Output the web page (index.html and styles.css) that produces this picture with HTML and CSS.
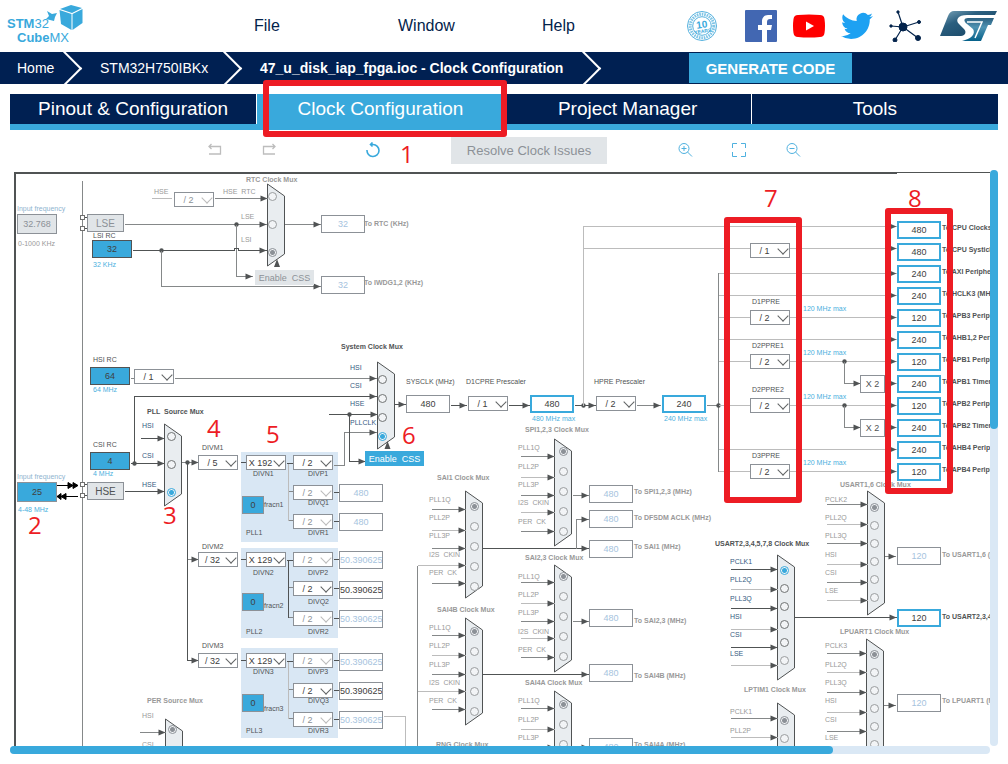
FILE: index.html
```html
<!DOCTYPE html>
<html lang="en">
<head>
<meta charset="utf-8">
<title>STM32CubeMX - Clock Configuration</title>
<link rel="stylesheet" href="styles.css">
</head>
<body>
<header class="topbar">
  <a class="logo" href="#" aria-label="STM32CubeMX">
    <svg class="logo-art" viewBox="0 0 80 48" aria-hidden="true">
      <path d="M53 7 64 3 75 6 65 11z" />
      <path d="M52.500 8 64.500 12V28L54 22z" />
      <path d="M65.500 12 75.500 7V21L65.500 28z" />
      <path d="M40 9l5 3 5-1-2 4-1 4-4-1-4-1 3-3z" />
    </svg>
    <span class="logo-top"><b>STM</b>32</span>
    <span class="logo-bottom"><b>Cube</b>MX</span>
  </a>
  <nav class="menu" aria-label="Main">
    <a href="#">File</a>
    <a href="#">Window</a>
    <a href="#">Help</a>
  </nav>
  <div class="links">
    <a href="#" aria-label="10 years longevity">
      <svg width="32" height="32" viewBox="0 0 32 32" fill="none" stroke="#55b1de">
        <circle cx="16" cy="16" r="14.500" /><circle cx="16" cy="16" r="11.800" stroke-width="3" stroke-dasharray="1.600 .900" opacity=".75" /><circle cx="16" cy="16" r="9.300" />
        <g transform="rotate(-8 16 16)"><text x="16" y="18" class="badge-num">10</text><text x="16" y="23" class="badge-cap">YEARS</text></g>
      </svg></a>
    <a href="#" aria-label="Facebook">
      <svg width="32" height="32" viewBox="0 0 32 32"><path fill="#4267b2" d="M1 0h30a1 1 0 0 1 1 1v30a1 1 0 0 1-1 1h-9V20h4l1-5h-5v-3c0-2 1-3 3-3h2V5h-4c-4 0-6 3-6 6v4h-4v5h4v12H1a1 1 0 0 1-1-1V1a1 1 0 0 1 1-1z" /></svg></a>
    <a href="#" aria-label="YouTube">
      <svg width="32" height="32" viewBox="0 0 32 32"><path fill="#f00" d="M5 5Q16 4 27 5q4 0 4.500 4 1 7 0 14-.5 4-4.500 4-11 1-22 0-4 0-4.500-4-1-7 0-14Q1 5 5 5z" /><path fill="#fff" d="M13 11.500v9l8-4.500z" /></svg></a>
    <a href="#" aria-label="Twitter">
      <svg width="32" height="32" viewBox="0 0 24 24"><path fill="#1da1f2" d="M23.950 4.570a10 10 0 0 1-2.820.770 4.960 4.960 0 0 0 2.160-2.720c-.950.550-2 .950-3.130 1.180a4.920 4.920 0 0 0-8.380 4.480C7.690 8.090 4.070 6.130 1.640 3.160a4.820 4.820 0 0 0-.670 2.480c0 1.710.870 3.210 2.190 4.090a4.900 4.900 0 0 1-2.230-.610v.060c0 2.390 1.700 4.380 3.950 4.830a5 5 0 0 1-2.210.080 4.940 4.940 0 0 0 4.600 3.420A9.870 9.870 0 0 1 0 19.540a14 14 0 0 0 7.550 2.210c9.050 0 14-7.500 14-13.980 0-.210 0-.420-.020-.630a9.940 9.940 0 0 0 2.460-2.550z" /></svg></a>
    <a href="#" aria-label="Community">
      <svg width="32" height="32" viewBox="0 0 32 32" fill="#03234b" stroke="#03234b"><path fill="none" stroke-width="1.200" d="M14 17 9 2M14 17 30 12M14 17 2 16M14 17 6 30M14 17 29 28" /><circle cx="14" cy="17" r="4" /><circle cx="9" cy="2" r="1.200" /><circle cx="30" cy="12" r="1.500" /><circle cx="2" cy="16" r="1.200" /><circle cx="6" cy="30" r="2" /><circle cx="29" cy="28" r="2.500" /></svg></a>
    <a href="#" aria-label="STMicroelectronics">
      <svg width="58" height="32" viewBox="0 0 58 32">
        <defs>
          <linearGradient id="st-back" x1="0" y1="0" x2="1" y2="1"><stop offset="0" stop-color="#7fa9bd" /><stop offset=".35" stop-color="#2b5f7f" /><stop offset="1" stop-color="#123f5e" /></linearGradient>
          <linearGradient id="st-front" x1="0" y1="0" x2="0" y2="1"><stop offset="0" stop-color="#2b5f7f" /><stop offset=".4" stop-color="#4f93b3" /><stop offset="1" stop-color="#05618a" /></linearGradient>
        </defs>
        <path fill="url(#st-back)" d="M14 1H57L55 5H27C18 5 15 10 19 14L24 19C27 22 25 26 21 26H0L8 6Q10 1 14 1z" />
        <path fill="url(#st-front)" d="M28 8H54L51 15H48L41 31H22C31 29 36 24 33 19L27 14C23 11 24 8 28 8z" />
        <path fill="none" stroke="#fff" stroke-width="1.500" d="M27 12H42L35 28" />
      </svg></a>
  </div>
</header>

<nav class="crumbs" aria-label="Breadcrumb">
  <a class="crumb crumb-home" href="#">Home</a>
  <a class="crumb crumb-chip" href="#">STM32H750IBKx</a>
  <a class="crumb crumb-file" href="#" aria-current="page">47_u_disk_iap_fpga.ioc - Clock Configuration</a>
  <button class="generate" type="button">GENERATE CODE</button>
</nav>

<nav class="tabs" aria-label="Project views">
  <a class="tab" href="#">Pinout &amp; Configuration</a>
  <a class="tab tab-active" href="#">Clock Configuration<span class="mark mark-tab"></span></a>
  <a class="tab" href="#">Project Manager</a>
  <a class="tab" href="#">Tools</a>
</nav>

<div class="toolbar">
  <div class="tools-history">
    <button class="tool" type="button" aria-label="Undo"><svg width="16" height="16" viewBox="0 0 16 16" fill="none" stroke="#bdbdbd" stroke-width="1.300"><path d="M4.500 2 2 4.500 4.500 7M2 4.500h11.500v7.500H2" /></svg></button>
    <button class="tool" type="button" aria-label="Redo"><svg width="16" height="16" viewBox="0 0 16 16" fill="none" stroke="#bdbdbd" stroke-width="1.300"><path d="M11.500 2 14 4.500 11.500 7M14 4.500H2.500v7.500H14" /></svg></button>
  </div>
  <button class="tool" type="button" aria-label="Reset"><svg width="16" height="16" viewBox="0 0 16 16" fill="none" stroke="#39a9dc" stroke-width="1.600"><path d="M6 2.500H8A6 6 0 1 1 2 8M7.500 .500 5.500 2.500l2 2" /></svg></button>
  <span class="step">1</span>
  <button class="resolve" type="button" disabled>Resolve Clock Issues</button>
  <div class="tools-zoom">
    <button class="tool" type="button" aria-label="Zoom in"><svg width="16" height="16" viewBox="0 0 16 16" fill="none" stroke="#4fb1df"><circle cx="7" cy="6.500" r="5" /><path d="M10.500 10 15 14.500M4.500 6.500h5M7 4v5" /></svg></button>
    <button class="tool" type="button" aria-label="Fit"><svg width="16" height="16" viewBox="0 0 16 16" fill="none" stroke="#4fb1df"><path d="M1.500 6V1.500H6M10 1.500h4.500V6M14.500 10v4.500H10M6 14.500H1.500V10" /></svg></button>
    <button class="tool" type="button" aria-label="Zoom out"><svg width="16" height="16" viewBox="0 0 16 16" fill="none" stroke="#4fb1df"><circle cx="7" cy="6.500" r="5" /><path d="M10.500 10 15 14.500M4.500 6.500h5" /></svg></button>
  </div>
</div>

<main class="workspace">
  <div class="viewport"><div class="board" id="board"></div></div>
  <div class="scroll scroll-v"><div class="thumb"></div></div>
  <div class="scroll scroll-h"><div class="thumb"></div></div>
</main>
<script src="board.js"></script>
</body>
</html>
```
FILE: styles.css
```css
* { box-sizing: border-box; }
body {
  margin: 0;
  height: 100vh;
  display: flex;
  flex-direction: column;
  overflow: hidden;
  background: #fff;
  font-family: "Liberation Sans", Arial, sans-serif;
  color: #03234b;
}
a { color: inherit; text-decoration: none; }
button, input, select { font-family: inherit; margin: 0; padding: 0; border-radius: 0; }

.topbar { display: flex; align-items: center; height: 52px; flex: none; padding: 0 10px 0 7px; }
.logo { position: relative; display: flex; flex-direction: column; width: 80px; height: 48px; padding-top: 15px; color: #39a9dc; font-size: 13px; line-height: 14px; white-space: nowrap; }
.logo-bottom { padding-left: 10px; }
.logo-art { position: absolute; inset: 0; width: 80px; height: 48px; fill: #39a9dc; }
.menu { display: grid; grid-template-columns: repeat(3, 144px); margin-left: 167px; font-size: 16px; }
.links { display: flex; align-items: center; gap: 16px; margin-left: auto; }
.links a { display: flex; }
.links a:first-child { margin-right: 11px; }
.links a:last-child { margin-left: 3px; }
.badge-num { font: bold 10px "Liberation Sans", sans-serif; fill: #39a9dc; stroke: none; text-anchor: middle; }
.badge-cap { font: bold 5px "Liberation Sans", sans-serif; fill: #39a9dc; stroke: none; text-anchor: middle; }

.crumbs { display: flex; align-items: stretch; height: 32px; flex: none; background: #002052; color: #fff; font-size: 14px; overflow: hidden; }
.crumb { position: relative; display: flex; align-items: center; }
.crumb::after { content: ""; position: absolute; right: 7px; top: 4px; width: 23px; height: 23px; border: solid #fff; border-width: 2px 2px 0 0; transform: rotate(45deg); }
.crumb-home { width: 84px; padding-left: 17px; }
.crumb-chip { width: 160px; padding-left: 16px; }
.crumb-file { width: 359px; padding-left: 16px; font-weight: bold; }
.generate { margin: 1px 0 1px 86px; width: 163px; border: 0; background: #39a9dc; color: #fff; font-size: 15px; font-weight: bold; }

.tabs { display: grid; grid-template-columns: repeat(4, 1fr); gap: 1px; flex: none; height: 36px; margin: 10px 10px 0; border-bottom: 6px solid #39a9dc; }
.tab { position: relative; display: flex; align-items: center; justify-content: center; background: #002052; color: #fff; font-size: 19px; }
.tab-active { background: #39a9dc; }
.mark { position: absolute; border: 6px solid #ed1c24; border-radius: 3px; z-index: 5; pointer-events: none; }
.mark-tab { inset: -14px -3px -13px 6px; }

.toolbar { display: flex; align-items: center; flex: none; height: 40px; padding-left: 207px; }
.tool { display: flex; border: 0; background: none; }
.tools-history { display: flex; gap: 38px; margin-right: 88px; }
.tools-zoom { display: flex; gap: 38px; margin-left: 70px; }
.step { color: #ed1c24; font: 24px/24px "Open Sans", "Noto Sans", sans-serif; }
.toolbar .step { width: 14px; margin: 8px 37px 0 19px; }
.resolve { width: 156px; height: 27px; border: 0; background: #e1e5e8; color: #8c9197; font-size: 13px; }

.workspace { display: grid; grid-template: 1fr 8px / 1fr 8px; flex: 1; min-height: 0; margin: 0 10px 10px; }
.viewport { position: relative; overflow: hidden; }
.scroll { border-radius: 4px; background: #dae8f5; }
.scroll .thumb { border-radius: 4px; background: #39a9dc; }
.scroll-v .thumb { width: 8px; height: 45%; }
.scroll-h .thumb { height: 8px; width: 84%; }

/* Diagram */
.board { position: relative; width: 1400px; height: 900px; }
.board > * { position: absolute; }
.wires { left: 0; top: 0; }
.wire { fill: none; stroke-width: 1; shape-rendering: crispEdges; }
.wire-dark { stroke: #505354; }
.wire-mid { stroke: #858889; }
.wire-light { stroke: #bcbcbc; }
.mux-shape { fill: #e9edf0; stroke: #505354; }
.pll { fill: #d9e7f4; }
.text { font-size: 7px; line-height: 8px; white-space: pre; color: #505354; }
.text-off { color: #999; }
.text-blue { color: #4bb0de; }
.text-input { color: #355b82; }
.text-sky { color: #8fb4cf; }
.text-bold { font-weight: bold; }
.field { width: 44px; height: 18px; border: 1px solid #8c9197; background: #fff; color: #404040; font-size: 9px; text-align: center; }
.field-off { color: #a6c3de; }
.field-live { border: 2px solid #39a9dc; }
.field-source { width: 40px; background: #39a9dc; border-color: #505354; }
.field-frac { width: 22px; background: #39a9dc; }
.field-gray { width: 40px; height: 20px; background: #e1e5e8; color: #8c9197; }
.field-crystal { width: 40px; height: 20px; background: #39a9dc; }
.pick { width: 40px; height: 15px; }
.pick select { display: block; width: 100%; height: 100%; appearance: none; border: 1px solid #8c9197; background: #fff; color: #404040; font-size: 9px; padding-right: 11px; text-align: center; text-align-last: center; }
.pick::after { content: ""; position: absolute; right: 3px; top: 2px; width: 7px; height: 7px; border: solid #606364; border-width: 0 1px 1px 0; transform: rotate(45deg); pointer-events: none; }
.pick-off select { color: #8c9197; opacity: 1; }
.pick-off::after { border-color: #bbb; }
.radio { appearance: none; width: 9px; height: 9px; border: 1px solid #707374; border-radius: 50%; background: #f2f4f6; }
.radio-off { border-color: #9a9d9f; }
.radio:checked { border-color: #8c9197; background: radial-gradient(circle, #8c9197 2px, #f2f4f6 3px); }
.radio-live:checked { border-color: #39a9dc; background: radial-gradient(circle, #39a9dc 2px, #f2f4f6 3px); }
.key { width: 37px; height: 18px; border: 1px solid #8c9197; background: #e1e5e8; color: #505354; font-size: 10px; }
.key-off { color: #8c9197; }
.css { width: 59px; height: 15px; border: 0; background: #39a9dc; color: #fff; font-size: 9px; white-space: pre; }
.css-off { background: #e1e5e8; color: #8c9197; }
.times { width: 25px; height: 18px; border: 1px solid #8c9197; background: #fff; color: #505354; font-size: 9px; line-height: 16px; text-align: center; }
```
FILE: board.js
```js
// Position of the visible board corner in diagram coordinates.
const ORIGIN = { x: 10, y: 170 };
const board = document.getElementById('board');
let serial = 0;
let svg = '';

function add(tag, cls, x, y, props = {}) {
  const el = document.createElement(tag);
  el.className = cls;
  el.style.left = x - ORIGIN.x + 'px';
  el.style.top = y - ORIGIN.y + 'px';
  Object.assign(el, props);
  board.append(el);
  return el;
}

// y is the vertical centre of the text.
function text(str, x, y, cls = '', target) {
  const el = add(target ? 'label' : 'span', 'text ' + cls, x, y - 4, { textContent: str });
  if (target) el.htmlFor = target;
}

function field(value, x, y, cls, name) {
  const el = add('input', 'field ' + cls, x, y, { value, type: 'text', id: 'f' + ++serial, readOnly: true });
  el.setAttribute('aria-label', name || 'Frequency');
  return el.id;
}

function pick(value, x, y, name, off) {
  const wrap = add('span', 'pick' + (off ? ' pick-off' : ''), x, y);
  const sel = document.createElement('select');
  sel.id = 's' + ++serial;
  sel.disabled = !!off;
  sel.setAttribute('aria-label', name);
  sel.append(new Option(value));
  wrap.append(sel);
  return sel.id;
}

function wire(points, shade = 'mid', head = false) {
  const p = points.map((v) => Math.floor(v) + 0.5);
  svg += `<polyline class="wire wire-${shade}" points="${p.join(' ')}"/>`;
  if (head) arrow(p[p.length - 2], p[p.length - 1]);
}
function arrow(x, y) { svg += `<path fill="#505354" d="M${x} ${y}l-7-3v6z"/>`; }
function up(x, y) { svg += `<path fill="#505354" d="M${x} ${y}l-3 8h6z"/>`; }
function dot(x, y) { svg += `<circle fill="#505354" cx="${x}" cy="${y}" r="2.2"/>`; }

// inputs: [label, label y, wire y, wire start x, label x]
function mux(m) {
  const edge = m.x + 17;
  svg += `<path class="mux-shape" d="M${m.x + 0.5} ${m.top}L${edge + 0.5} ${m.top + 12}V${m.bottom - 12}L${m.x + 0.5} ${m.bottom}z"/>`;
  text(m.title, m.tx, m.ty, 'text-bold ' + (m.live ? '' : 'text-off'));
  m.radios.forEach((ry, i) => {
    const state = (m.live ? ' radio-live' : '') + (!m.live || i === m.offRadio ? ' radio-off' : '');
    const el = add('input', 'radio' + state, m.rx - 4, ry - 4, { type: 'radio', name: m.title, id: 'r' + ++serial, checked: i === m.on });
    const input = m.inputs[i];
    if (!input) { el.setAttribute('aria-label', m.title); return; }
    text(input[0], input[4] || m.lx, input[1], m.live ? 'text-input' : 'text-off', el.id);
    if (input[2]) wire([input[3] || m.wx, input[2], m.x, input[2]], i % 2 ? 'light' : (m.live ? 'dark' : 'mid'), true);
  });
}

// Frame
svg += '<path fill="#505354" d="M14 172H990V173H897V174H16V760H14z"/>';
wire([82, 180, 82, 760], 'mid');

// External and internal oscillators
text('Input frequency', 17, 209, 'text-sky');
field('32.768', 17, 214, 'field-gray', 'LSE input frequency');
text('0-1000 KHz', 18, 244, 'text-off');
add('button', 'key key-off', 87, 214, { textContent: 'LSE', type: 'button' });
text('LSI RC', 93, 236);
field('32', 92, 240, 'field-source', 'LSI RC');
text('32 KHz', 93, 265, 'text-blue');
text('HSI RC', 93, 360);
field('64', 90, 367, 'field-source', 'HSI RC');
text('64 MHz', 93, 390, 'text-blue');
pick('/ 1', 134, 369, 'HSI divider');
text('CSI RC', 93, 445);
field('4', 90, 452, 'field-source', 'CSI RC');
text('4 MHz', 93, 474, 'text-blue');
text('Input frequency', 17, 477, 'text-sky');
field('25', 17, 482, 'field-crystal', 'HSE input frequency');
text('4-48 MHz', 18, 510, 'text-blue');
add('button', 'key', 87, 482, { textContent: 'HSE', type: 'button' });
[217, 228, 484, 495].forEach((y) => {
  wire([84, y, 87, y], 'dark');
  svg += `<rect x="80.500" y="${y - 1.5}" width="4" height="4" fill="#fff" stroke="#707070"/>`;
});
svg += '<path stroke="#000" d="M57 485.500H78M78 496.500H57M68 482.500l5 3-5 3zM73 482.500l5 3-5 3zM66 493.500l-5 3 5 3zM61 493.500l-4 3 4 3z"/>';

// RTC and IWDG
mux({ title: 'RTC Clock Mux', tx: 246, ty: 180, x: 267, top: 184, bottom: 266, rx: 272, radios: [196, 224, 252], on: 2, lx: 241,
  inputs: [['HSE  RTC', 192, 198, 214, 223], ['LSE', 217, 0], ['LSI', 240, 0]] });
text('HSE', 154, 192, 'text-off');
wire([151, 198, 171, 198], 'light');
pick('/ 2', 174, 192, 'HSE RTC divider', true);
wire([124, 224, 266, 224], 'mid', true);
dot(236.5, 224.5);
wire([236, 224, 236, 276, 252, 276], 'mid', true);
wire([132, 250, 234, 250, 234, 248, 238, 248, 238, 250, 266, 250], 'dark', true);
dot(161.5, 250.5);
wire([161, 250, 161, 286, 320, 286], 'mid', true);
wire([284, 224, 320, 224], 'mid', true);
field('32', 321, 215, 'field-off', 'RTC');
field('32', 321, 276, 'field-off', 'IWDG');
text('To RTC (KHz)', 364, 224, 'text-bold text-off');
text('To IWDG1,2 (KHz)', 364, 283, 'text-bold text-off');
add('button', 'css css-off', 255, 270, { textContent: 'Enable  CSS', type: 'button' });
up(277, 259);

// PLL source
mux({ title: 'PLL  Source Mux', tx: 147, ty: 412, x: 164, top: 424, bottom: 506, rx: 171, radios: [436, 464, 492], on: 2, live: true, lx: 142, wx: 140,
  inputs: [['HSI', 426, 438], ['CSI', 456, 0], ['HSE', 485, 491, 124]] });
wire([130, 463, 164, 463], 'dark', true);
dot(134.5, 463.5);
wire([134, 463, 134, 396, 376, 396], 'dark', true);
wire([130, 378, 134, 378]);
wire([174, 378, 376, 378], 'mid', true);
wire([181, 462, 198, 462], 'mid', true);
dot(187.5, 462.5);
wire([187, 462, 187, 660, 198, 660], 'dark', true);
wire([187, 559, 198, 559], 'mid', true);

mux({ title: 'PER Source Mux', tx: 147, ty: 701, x: 165, top: 719, bottom: 801, rx: 172, radios: [729], on: 0, lx: 142, wx: 139,
  inputs: [['HSI', 716, 732]] });
text('CSI', 142, 745, 'text-off');

// PLL blocks
[
  { n: 1, top: 452, m: '/ 5', mult: 'X 192', row: [455, 485, 514], lab: [474, 503, 533], frac: 496, fl: 505, div: 448, out: [0, 484, 513], val: '480', on: [1, 0, 0] },
  { n: 2, top: 548, m: '/ 32', mult: 'X 129', row: [552, 581, 611], lab: [573, 602, 632], frac: 593, fl: 606, div: 547, out: [551, 581, 610], val: '50.390625', on: [0, 1, 0] },
  { n: 3, top: 648, m: '/ 32', mult: 'X 129', row: [653, 683, 712], lab: [672, 701, 731], frac: 694, fl: 709, div: 646, out: [653, 682, 711], val: '50.390625', on: [0, 1, 0] },
].forEach((p) => {
  svg += `<rect class="pll" x="241" y="${p.top}" width="97" height="90"/>`;
  text('DIVM' + p.n, 202, p.div, '', pick(p.m, 198, p.row[0], 'DIVM' + p.n));
  text('DIVN' + p.n, 253, p.lab[0], '', pick(p.mult, 246, p.row[0], 'DIVN' + p.n));
  text('PLL' + p.n, 246, p.lab[2]);
  text('fracn' + p.n, 264, p.fl, '', field('0', 242, p.frac, 'field-frac', 'fracn' + p.n));
  wire([240, p.row[0] + 7, 246, p.row[0] + 7], 'dark');
  wire([286, p.row[0] + 8, 293, p.row[0] + 8], 'dark');
  wire([288, p.row[0] + 8, 288, p.row[2] + 6], p.n === 2 ? 'dark' : 'light');
  ['P', 'Q', 'R'].forEach((k, i) => {
    const name = 'DIV' + k + p.n;
    text(name, 308, p.lab[i], '', pick('/ 2', 293, p.row[i], name, !p.on[i]));
    if (i) wire([288, p.row[i] + 6, 293, p.row[i] + 6], 'mid');
    if (p.out[i]) {
      wire([333, p.row[i] + 7, 339, p.row[i] + 7], 'dark');
      field(p.val, 339, p.out[i], p.on[i] ? '' : 'field-off', name + ' output');
    }
  });
});
wire([333, 465, 344, 465, 344, 432, 376, 432], 'mid', true);
wire([383, 716, 405, 716, 405, 760], 'light');

// System clock
mux({ title: 'System Clock Mux', tx: 341, ty: 347, x: 377, top: 362, bottom: 449, rx: 382, radios: [379, 398, 417, 436], on: 3, live: true, lx: 350, wx: 328,
  inputs: [['HSI', 368, 0], ['CSI', 386, 0], ['HSE', 404, 414], ['PLLCLK', 423, 0]] });
dot(349.5, 414.5);
wire([349, 414, 349, 461, 365, 461], 'dark', true);
add('button', 'css', 365, 451, { textContent: 'Enable  CSS', type: 'button' });
up(387.5, 441);
wire([394, 404, 405, 404], 'dark', true);
text('SYSCLK (MHz)', 406, 382, '', field('480', 406, 395, '', 'SYSCLK'));
wire([450, 405, 466, 405], 'dark', true);
text('D1CPRE Prescaler', 466, 382, '', pick('/ 1', 468, 396, 'D1CPRE Prescaler'));
wire([508, 405, 529, 405], 'dark', true);
field('480', 530, 395, 'field-live', 'D1CPRE output');
text('480 MHz max', 532, 419, 'text-blue');
wire([574, 405, 595, 405], 'dark', true);
dot(583.5, 405.5);
wire([583, 405, 583, 226, 896, 226], 'light', true);
wire([583, 248, 896, 248], 'light', true);
text('HPRE Prescaler', 594, 382, '', pick('/ 2', 596, 396, 'HPRE Prescaler'));
wire([636, 405, 660, 405], 'mid', true);
field('240', 662, 395, 'field-live', 'HPRE output');
text('240 MHz max', 664, 419, 'text-blue');
wire([706, 405, 750, 405], 'mid');
wire([718, 272, 718, 471], 'mid');
dot(718.5, 405.5);

// Bus clocks
[
  ['480', 'CPU Clocks (MHz)'], ['480', 'CPU Systick (MHz)'], ['240', 'AXI Peripheral Clocks (MHz)'], ['240', 'HCLK3 (MHz)'],
  ['120', 'APB3 Peripheral Clocks (MHz)'], ['240', 'AHB1,2 Peripheral Clocks (MHz)'], ['120', 'APB1 Peripheral Clocks (MHz)'],
  ['240', 'APB1 Timer Clocks (MHz)'], ['120', 'APB2 Peripheral Clocks (MHz)'], ['240', 'APB2 Timer Clocks (MHz)'],
  ['240', 'AHB4 Peripheral Clocks (MHz)'], ['120', 'APB4 Peripheral Clocks (MHz)'],
].forEach(([value, name], i) => {
  const y = 221 + 22 * i;
  text('To ' + name, 942, y + 7, 'text-bold', field(value, 897, y, 'field-live', name));
  if (i > 1) wire([i === 7 || i === 9 ? 885 : 718, y + 8, 896, y + 8], 'light', true);
});
pick('/ 1', 750, 243, 'CPU Systick divider');
[['D1PPRE', 310], ['D2PPRE1', 354], ['D2PPRE2', 398], ['D3PPRE', 464]].forEach(([name, y]) => {
  text(name, 752, y - 8, '', pick('/ 2', 750, y, name));
  text('120 MHz max', 803, y - 1, 'text-blue');
});
[361, 405].forEach((y) => {
  dot(844.5, y + 0.5);
  wire([844, y, 844, y + 22, 860, y + 22], 'mid', true);
  add('span', 'times', 860, y + 14, { textContent: 'X 2' });
});

// Peripheral kernel clocks
const audio = ['PLL1Q', 'PLL2P', 'PLL3P', 'I2S  CKIN', 'PER  CK'];
function audioMux(title, tx, ty, x, top, labels, wires, extra = {}) {
  mux({ title, tx, ty, x, top, bottom: top + 107, rx: x + 9, lx: x - 36, wx: x - 34, on: 0,
    radios: labels.map((_, i) => top + (extra.first || 13) + 20 * i),
    inputs: labels.map((y, i) => [audio[i], y, wires[i], extra.bus && i === 3 ? 417 : 0]) });
}
audioMux('SPI1,2,3 Clock Mux', 525, 430, 554, 439, [448, 467, 485, 503, 522], [456, 477, 495, 512, 531], { first: 12 });
audioMux('SAI1 Clock Mux', 437, 478, 465, 491, [500, 518, 536, 555, 573], [509, 530, 548, 565, 583], { bus: true, first: 15 });
audioMux('SAI2,3 Clock Mux', 525, 558, 554, 565, [577, 595, 613, 632, 650], [582, 603, 621, 638, 657], { first: 11 });
audioMux('SAI4B Clock Mux', 437, 610, 465, 618, [628, 646, 665, 683, 701], [635, 655, 674, 691, 709], { bus: true });
audioMux('SAI4A Clock Mux', 525, 683, 554, 691, [701, 720, 738, 757, 775], [708, 729, 747, 765, 783]);
text('RNG Clock Mux', 436, 745, 'text-bold text-off');
wire([417, 760, 417, 565], 'mid');
wire([572, 495, 588, 495], 'mid', true);
wire([482, 548, 588, 548], 'dark', true);
wire([576, 548, 576, 519, 588, 519], 'mid', true);
wire([572, 621, 588, 621], 'mid', true);
wire([482, 674, 588, 674], 'dark', true);
wire([572, 747, 588, 747], 'mid', true);
[['SPI1,2,3', 485, 492], ['DFSDM ACLK', 510, 518], ['SAI1', 540, 547], ['SAI2,3', 609, 621], ['SAI4B', 664, 676], ['SAI4A', 738, 745]].forEach(([name, y, ty]) => {
  text(`To ${name} (MHz)`, 634, ty, 'text-bold text-off', field('480', 589, y, 'field-off', name));
});

const serialInputs = (first, ys, wires) => [first, 'PLL2Q', 'PLL3Q', 'HSI', 'CSI', 'LSE'].map((s, i) => [s, ys[i], wires[i]]);
mux({ title: 'USART2,3,4,5,7,8 Clock Mux', tx: 715, ty: 544, x: 777, top: 555, bottom: 680, rx: 784, radios: [570, 588, 606, 624, 642, 660], on: 0, live: true, offRadio: 5, lx: 730, wx: 730,
  inputs: serialInputs('PCLK1', [562, 580, 599, 617, 635, 654], [569, 589, 608, 629, 647, 665]) });
mux({ title: 'USART1,6 Clock Mux', tx: 840, ty: 485, x: 867, top: 491, bottom: 615, rx: 874, radios: [507, 525, 543, 561, 579, 597], on: 0, lx: 825, wx: 826,
  inputs: serialInputs('PCLK2', [500, 518, 536, 555, 573, 591], [504, 524, 543, 564, 582, 600]) });
mux({ title: 'LPUART1 Clock Mux', tx: 840, ty: 632, x: 866, top: 639, bottom: 763, rx: 874, radios: [654, 672, 690, 708, 726, 744], on: 0, lx: 825, wx: 826,
  inputs: serialInputs('PCLK3', [646, 665, 683, 701, 720, 738], [653, 672, 692, 712, 731, 751]) });
mux({ title: 'LPTIM1 Clock Mux', tx: 744, ty: 690, x: 777, top: 703, bottom: 828, rx: 784, radios: [720, 738], on: 0, lx: 730, wx: 730,
  inputs: [['PCLK1', 712, 718], ['PLL2P', 731, 737]] });
wire([794, 617, 896, 617], 'dark', true);
wire([884, 556, 895, 556], 'mid', true);
wire([883, 705, 895, 705], 'mid', true);
text('To USART1,6 (MHz)', 942, 555, 'text-bold text-off', field('120', 897, 547, 'field-off', 'USART1,6'));
text('To USART2,3,4,5,7,8 (MHz)', 942, 617, 'text-bold', field('120', 897, 609, 'field-live', 'USART2,3,4,5,7,8'));
text('To LPUART1 (MHz)', 942, 701, 'text-bold text-off', field('120', 897, 694, 'field-off', 'LPUART1'));

// Step marks
[['2', 34, 526], ['3', 169, 516], ['4', 213, 429], ['5', 272, 435], ['6', 408, 436], ['7', 770, 199], ['8', 914, 199]].forEach(([n, x, y]) => {
  add('span', 'step', x - 6, y - 13, { textContent: n });
});
[[724, 217, 78, 286], [885, 208, 68, 286]].forEach(([x, y, w, h]) => {
  const el = add('span', 'mark', x, y);
  el.style.width = w + 'px';
  el.style.height = h + 'px';
});

board.insertAdjacentHTML('afterbegin', `<svg class="wires" width="1400" height="900" viewBox="${ORIGIN.x} ${ORIGIN.y} 1400 900">${svg}</svg>`);
```
